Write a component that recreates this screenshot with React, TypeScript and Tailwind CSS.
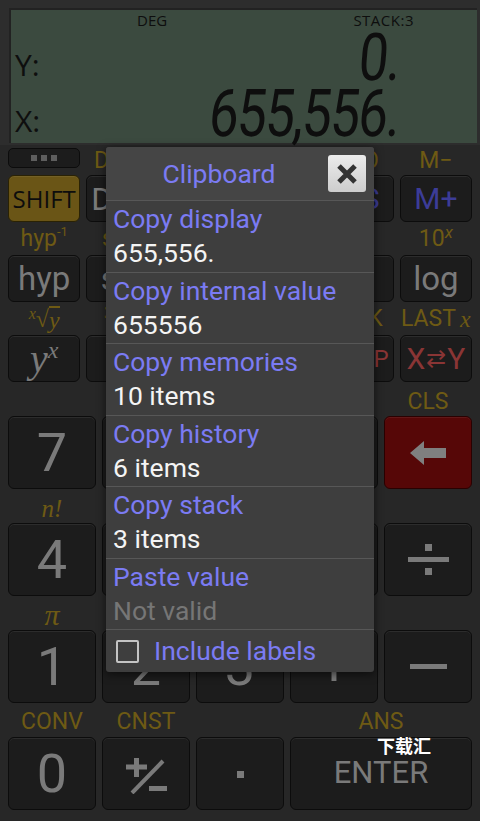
import type { ReactNode } from "react";

const GOLD = "text-[#6e5a14]";
const GRAY = "text-[#7a7a7a]";

function Key({ className = "", children }: { className?: string; children?: ReactNode }) {
  return (
    <div
      className={`flex items-center justify-center rounded-[6px] border border-[#0c0c0c] shadow-[inset_0_1px_0_rgba(255,255,255,0.07)] ${className}`}
    >
      {children}
    </div>
  );
}

function Label({ className = "", children }: { className?: string; children?: ReactNode }) {
  return (
    <div className={`flex items-center justify-center text-[23px] leading-none ${GOLD} ${className}`}>
      {children}
    </div>
  );
}

const items = [
  { title: "Copy display", value: "655,556." },
  { title: "Copy internal value", value: "655556" },
  { title: "Copy memories", value: "10 items" },
  { title: "Copy history", value: "6 items" },
  { title: "Copy stack", value: "3 items" },
  { title: "Paste value", value: "Not valid", disabled: true },
];

export default function App() {
  return (
    <div className="relative w-[480px] h-[821px] overflow-hidden bg-[#272727] font-['Roboto',sans-serif]">
      {/* LCD display */}
      <div className="h-[145px] bg-[#2d2d2d] pt-[8px] pl-[9px] pr-[3px]">
        <div className="h-[135px] bg-[#3b4a3f] border-t-2 border-l-2 border-[#222] flex flex-col text-[#0e0e0e]">
          <div className="h-[20px] flex items-center text-[15px] font-['Open_Sans',sans-serif]">
            <span className="ml-[126px]">DEG</span>
            <span className="ml-auto mr-[63px] tracking-[0.5px]">STACK:3</span>
          </div>
          <div className="h-[56px] flex items-end">
            <span className="ml-[4px] mb-[6px] text-[30px] leading-none font-['Open_Sans',sans-serif]">Y:</span>
            <span className="ml-auto mr-[78px] inline-block origin-right scale-x-[0.8] -skew-x-6 text-[66px] leading-[0.85] tracking-[-2px]">
              0.
            </span>
          </div>
          <div className="h-[56px] flex items-end">
            <span className="ml-[4px] mb-[6px] text-[30px] leading-none font-['Open_Sans',sans-serif]">X:</span>
            <span className="ml-auto mr-[78px] inline-block origin-right scale-x-[0.8] -skew-x-6 text-[66px] leading-[0.85] tracking-[-2px]">
              655,556.
            </span>
          </div>
        </div>
      </div>

      {/* upper keys */}
      <div className="grid grid-cols-6 gap-x-[6px] px-2 grid-rows-[30px_47px_33px_47px_33px_47px]">
        <div className="pt-[3px]">
          <div className="h-[20px] rounded-[5px] bg-[#1c1c1c] border border-[#0c0c0c] flex items-center justify-center gap-[4px]">
            <span className="w-[6px] h-[6px] bg-[#5e5e5e]" />
            <span className="w-[6px] h-[6px] bg-[#5e5e5e]" />
            <span className="w-[6px] h-[6px] bg-[#5e5e5e]" />
          </div>
        </div>
        <Label>DRG▸</Label>
        <div />
        <div />
        <Label>STO</Label>
        <Label>M−</Label>

        <Key className="bg-[#6a5516] border-[#2a2204]">
          <span className="text-[24px] text-[#0d0d0d] font-['Open_Sans',sans-serif]">SHIFT</span>
        </Key>
        <Key className="bg-[#1c1c1c]">
          <span className={`text-[32px] ${GRAY}`}>DRG</span>
        </Key>
        <Key className="bg-[#1c1c1c]" />
        <Key className="bg-[#1c1c1c]" />
        <Key className="bg-[#1c1c1c]">
          <span className="text-[30px] text-[#3c3c98]">MS</span>
        </Key>
        <Key className="bg-[#1c1c1c]">
          <span className="text-[30px] text-[#3c3c98]">M+</span>
        </Key>

        <Label>
          hyp<sup className="text-[13px] -top-[7px]">-1</sup>
        </Label>
        <Label>
          sin<sup className="text-[13px] -top-[7px]">-1</sup>
        </Label>
        <div />
        <div />
        <div />
        <Label>
          10<sup className="text-[17px] italic -top-[7px]">x</sup>
        </Label>

        <Key className="bg-[#1c1c1c]">
          <span className={`text-[33px] ${GRAY}`}>hyp</span>
        </Key>
        <Key className="bg-[#1c1c1c]">
          <span className={`text-[33px] ${GRAY}`}>sin</span>
        </Key>
        <Key className="bg-[#1c1c1c]" />
        <Key className="bg-[#1c1c1c]" />
        <Key className="bg-[#1c1c1c]" />
        <Key className="bg-[#1c1c1c]">
          <span className={`text-[33px] ${GRAY}`}>log</span>
        </Key>

        <Label className="font-['Liberation_Serif',serif] italic text-[24px]">
          <sup className="text-[16px] -top-[5px]">x</sup>
          <span className="not-italic">√</span>
          <span className="border-t-2 border-[#6e5a14]">y</span>
        </Label>
        <Label className="font-['Liberation_Serif',serif] text-[27px]">
          <sup className="text-[17px] -top-[6px]">3</sup>√x
        </Label>
        <div />
        <div />
        <Label>PICK</Label>
        <Label className="text-[21px]">
          LAST<span className="ml-[4px] italic font-['Liberation_Serif',serif] text-[24px]">x</span>
        </Label>

        <Key className="bg-[#1c1c1c]">
          <span className={`font-['Liberation_Serif',serif] italic text-[40px] leading-none ${GRAY}`}>
            y<sup className="text-[24px] -top-[14px]">x</sup>
          </span>
        </Key>
        <Key className="bg-[#1c1c1c]">
          <span className={`text-[30px] ${GRAY}`}>√x</span>
        </Key>
        <Key className="bg-[#1c1c1c]" />
        <Key className="bg-[#1c1c1c]" />
        <Key className="bg-[#1c1c1c]">
          <span className="text-[24px] text-[#8a3535]">DROP</span>
        </Key>
        <Key className="bg-[#1c1c1c]">
          <span className="text-[30px] text-[#8a3535] flex items-center">
            X<span className="text-[24px] mx-[1px]">⇄</span>Y
          </span>
        </Key>
      </div>

      {/* number pad */}
      <div className="grid grid-cols-5 gap-x-[6px] px-2 grid-rows-[34px_73px_34px_73px_34px_73px_34px_73px]">
        <div />
        <div />
        <div />
        <div />
        <Label className="pt-[4px]">CLS</Label>

        <Key className="bg-[#1c1c1c]">
          <span className={`text-[54px] ${GRAY}`}>7</span>
        </Key>
        <Key className="bg-[#1c1c1c]" />
        <Key className="bg-[#1c1c1c]" />
        <Key className="bg-[#1c1c1c]" />
        <Key className="bg-[#560707] border-[#2a0101]">
          <svg width="36" height="24" viewBox="0 0 36 24">
            <polygon points="0,12 14,0 14,7 36,7 36,17 14,17 14,24" fill="#7f7f7f" />
          </svg>
        </Key>

        <Label className="pt-[4px] font-['Liberation_Serif',serif] italic text-[25px]">n!</Label>
        <div />
        <div />
        <div />
        <div />

        <Key className="bg-[#1c1c1c]">
          <span className={`text-[54px] ${GRAY}`}>4</span>
        </Key>
        <Key className="bg-[#1c1c1c]" />
        <Key className="bg-[#1c1c1c]" />
        <Key className="bg-[#1c1c1c]" />
        <Key className="bg-[#1c1c1c]">
          <div className="flex flex-col items-center gap-[6px]">
            <span className="w-[7px] h-[7px] bg-[#7a7a7a]" />
            <span className="w-[41px] h-[5px] bg-[#7a7a7a]" />
            <span className="w-[7px] h-[7px] bg-[#7a7a7a]" />
          </div>
        </Key>

        <Label className="pt-[4px] font-['Liberation_Serif',serif] italic text-[30px]">π</Label>
        <div />
        <div />
        <div />
        <div />

        <Key className="bg-[#1c1c1c]">
          <span className={`text-[54px] ${GRAY}`}>1</span>
        </Key>
        <Key className="bg-[#1c1c1c]">
          <span className={`text-[54px] ${GRAY}`}>2</span>
        </Key>
        <Key className="bg-[#1c1c1c]">
          <span className={`text-[54px] ${GRAY}`}>3</span>
        </Key>
        <Key className="bg-[#1c1c1c]">
          <span className={`text-[54px] ${GRAY}`}>+</span>
        </Key>
        <Key className="bg-[#1c1c1c]">
          <span className="w-[37px] h-[5px] bg-[#7a7a7a]" />
        </Key>

        <Label className="pt-[3px]">CONV</Label>
        <Label className="pt-[3px]">CNST</Label>
        <div />
        <Label className="pt-[3px] col-span-2">ANS</Label>

        <Key className="bg-[#1c1c1c]">
          <span className={`text-[54px] ${GRAY}`}>0</span>
        </Key>
        <Key className="bg-[#1c1c1c]">
          <svg width="44" height="36" viewBox="0 0 44 36" className="mt-[5px]">
            <rect x="2" y="6.5" width="21" height="5" fill="#7a7a7a" />
            <rect x="10" y="-1" width="5" height="20" fill="#7a7a7a" />
            <line x1="8" y1="35" x2="39" y2="3" stroke="#7a7a7a" strokeWidth="4" />
            <rect x="25" y="28" width="18" height="5" fill="#7a7a7a" />
          </svg>
        </Key>
        <Key className="bg-[#1c1c1c]">
          <span className="w-[7px] h-[7px] bg-[#7a7a7a] mt-[2px]" />
        </Key>
        <Key className="bg-[#1c1c1c] col-span-2">
          <span className={`text-[31px] ${GRAY}`}>ENTER</span>
        </Key>
      </div>

      {/* watermark */}
      <div className="absolute left-[377px] top-[736px] text-[18px] font-bold text-white leading-none font-['Noto_Sans_CJK_SC',sans-serif]">
        下载汇
      </div>

      {/* clipboard dialog */}
      <div className="absolute left-[106px] top-[147px] w-[268px] h-[525px] rounded-[3px] bg-[#3e3e3e] shadow-[0_2px_10px_rgba(0,0,0,0.6)] flex flex-col overflow-hidden">
        <div className="h-[53px] shrink-0 flex items-center bg-[#454545]">
          <div className="flex-1 text-center text-[26.5px] text-[#7b7bf3] pl-[4px]">Clipboard</div>
          <div className="w-[38px] h-[37px] mr-[8px] rounded-[3px] bg-gradient-to-b from-[#ececec] to-[#cdcdcd] flex items-center justify-center">
            <svg width="22" height="22" viewBox="0 0 22 22">
              <path d="M3 3 L19 19 M19 3 L3 19" stroke="#333" strokeWidth="5" />
            </svg>
          </div>
        </div>
        {items.map((it) => (
          <div key={it.title} className="h-[71.5px] shrink-0 border-t border-[#575757] pl-[7px] pt-[1px] leading-[34px] text-[26.5px]">
            <div className="text-[#7b7bf3]">{it.title}</div>
            <div className={it.disabled ? "text-[#767676]" : "text-[#f4f4f4]"}>{it.value}</div>
          </div>
        ))}
        <div className="flex-1 border-t border-[#575757] flex items-center pl-[10px]">
          <span className="w-[23px] h-[23px] border-[2.5px] border-[#c4c4c4] rounded-[2px]" />
          <span className="ml-[15px] text-[26.5px] text-[#7b7bf3] leading-none">Include labels</span>
        </div>
      </div>
    </div>
  );
}
